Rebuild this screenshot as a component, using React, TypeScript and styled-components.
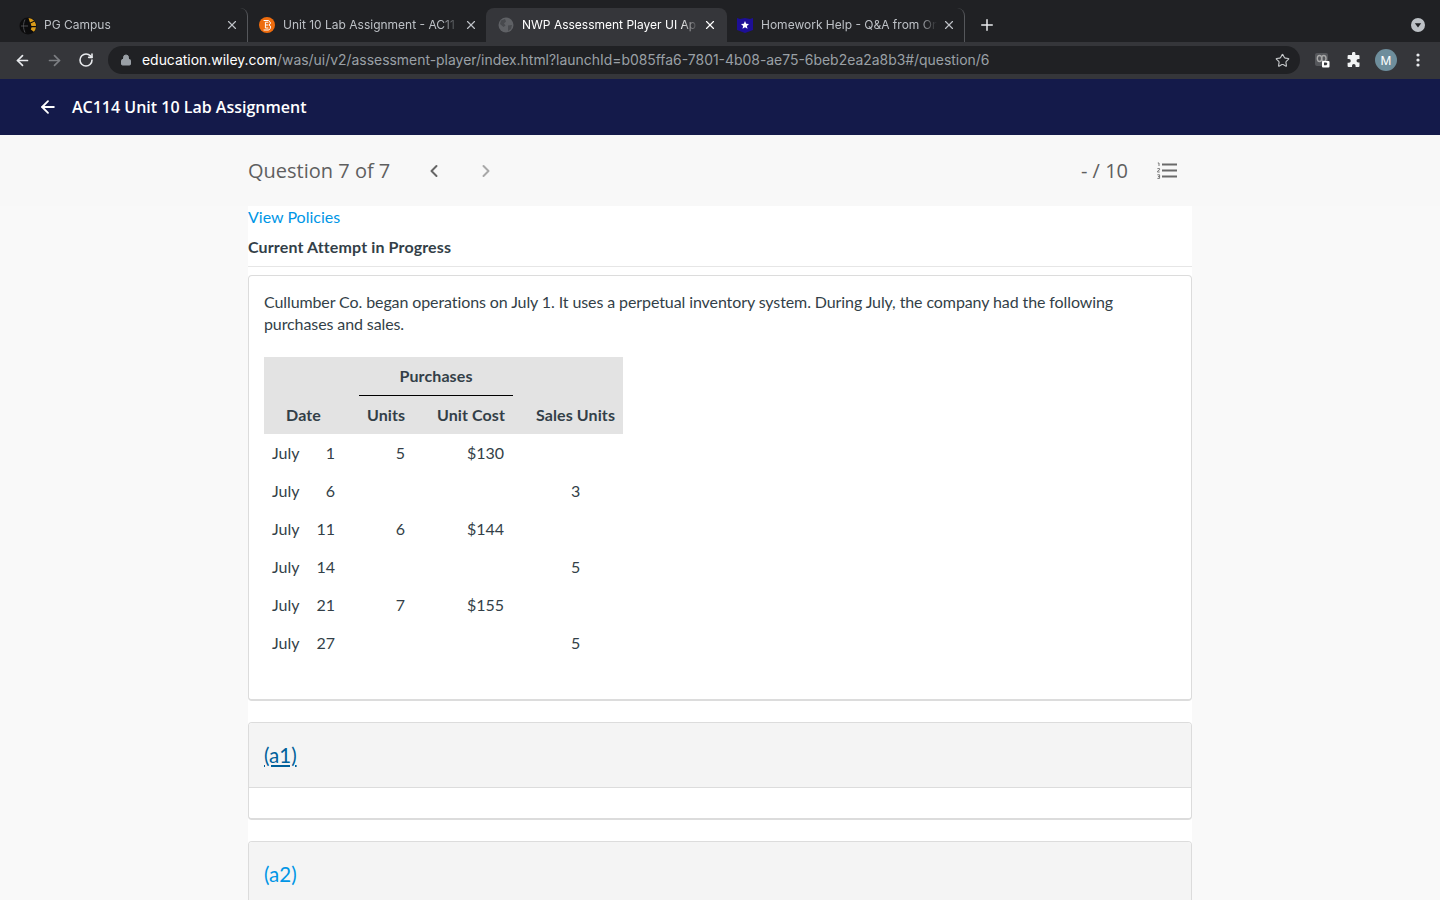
import React, { FC } from 'react'
import styled, { createGlobalStyle } from 'styled-components'
import { ArrowLeft, ArrowRight, RotateCw, Lock, Star, X, Plus, ChevronLeft, ChevronRight } from 'lucide-react'

const GlobalStyle = createGlobalStyle`
  html, body { margin: 0; padding: 0; height: 100%; overflow: hidden; background: #f9f9f9; }
  * { box-sizing: border-box; }
`

const Page = styled.div`
  width: 1440px;
  height: 900px;
  overflow: hidden;
  display: flex;
  flex-direction: column;
  font-family: Lato, "Liberation Sans", sans-serif;
  color: #333f48;
`

const TabStrip = styled.div`
  height: 42px;
  flex: none;
  background: #202124;
  display: flex;
  align-items: flex-end;
  padding-left: 8px;
  font-family: Inter, "Liberation Sans", sans-serif;
`

const Tab = styled.div<{ $active?: boolean; $divider?: boolean; $width: number; $left: number; $right: number }>`
  width: ${(p) => p.$width}px;
  height: 34px;
  display: flex;
  align-items: center;
  padding: 0 ${(p) => p.$right}px 0 ${(p) => p.$left}px;
  gap: 8px;
  background: ${(p) => (p.$active ? '#35363a' : 'transparent')};
  border-radius: 8px 8px 0 0;
  color: ${(p) => (p.$active ? '#fff' : '#bdc1c6')};
  font-size: 12px;
  border-right: ${(p) => (p.$divider ? '1px solid #55575b' : 'none')};
`

const TabTitle = styled.span`
  flex: 1;
  margin-right: -3px;
  padding-bottom: 2px;
  white-space: nowrap;
  overflow: hidden;
  -webkit-mask-image: linear-gradient(to right, #000 90%, transparent);
  mask-image: linear-gradient(to right, #000 90%, transparent);
`

const Favicon = styled.span`
  width: 16px;
  height: 16px;
  flex: none;
  display: flex;
  justify-content: center;
`

const NewTab = styled.div`
  margin-left: 13px;
  height: 34px;
  display: flex;
  align-items: center;
  color: #e8eaed;
`

const ProfileDrop = styled.div`
  margin-left: auto;
  margin-right: 14px;
  height: 34px;
  display: flex;
  align-items: center;
`

const Toolbar = styled.div`
  height: 37px;
  flex: none;
  background: #35363a;
  display: flex;
  align-items: center;
  padding: 0 0 1px 14px;
  font-family: Inter, "Liberation Sans", sans-serif;
`

const NavIcons = styled.div`
  display: flex;
  align-items: center;
  gap: 15px;
  width: 94px;
  color: #e8eaed;
`

const Omnibox = styled.div`
  width: 1192px;
  height: 28px;
  border-radius: 14px;
  background: #202124;
  display: flex;
  align-items: center;
  padding: 0 10px 0 12px;
  font-size: 13.93px;
`

const Host = styled.span`
  color: #fff;
  margin-left: 10px;
  padding-bottom: 1px;
`

const UrlPath = styled.span`
  color: #9aa0a6;
  flex: 1;
  padding-bottom: 1px;
`

const Extensions = styled.div`
  display: flex;
  align-items: center;
  margin-left: 14px;
  color: #e8eaed;
`

const PuzzleSlot = styled.span`
  display: flex;
  margin: 0 13px 0 16px;
`

const Avatar = styled.div`
  width: 22px;
  height: 22px;
  border-radius: 50%;
  background: #6e8e9c;
  color: #fff;
  font-size: 12px;
  display: flex;
  align-items: center;
  justify-content: center;
  margin-right: 19px;
`

const AppBar = styled.header`
  height: 56px;
  flex: none;
  background: #141a4a;
  color: #fff;
  display: flex;
  align-items: center;
  padding-left: 38px;
  gap: 14px;
  font-family: "Open Sans", sans-serif;
  font-size: 16px;
  font-weight: 600;
`

const AppTitle = styled.span`
  padding-bottom: 1px;
`

const QuestionBar = styled.div`
  height: 71px;
  flex: none;
  background: #f8f8f8;
  display: flex;
  justify-content: center;
`

const QuestionInner = styled.div`
  width: 944px;
  display: flex;
  align-items: center;
  font-family: "Open Sans", sans-serif;
  color: #5f5f5f;
  font-size: 20px;
  padding-right: 15px;
`

const Pager = styled.div`
  display: flex;
  gap: 32px;
  margin-left: 34px;
`

const PagerButton = styled.span<{ $dim?: boolean }>`
  display: flex;
  color: ${(p) => (p.$dim ? '#a8a8a8' : '#666')};
`

const Score = styled.div`
  margin-left: auto;
  margin-right: 29px;
`

const Column = styled.main`
  width: 944px;
  flex: 1;
  margin: 0 auto;
  background: #fff;
`

const PolicyLink = styled.a`
  display: block;
  color: #0096e6;
  font-size: 16px;
  line-height: 22px;
`

const AttemptTitle = styled.div`
  margin-top: 8px;
  height: 31px;
  line-height: 22px;
  font-size: 16px;
  font-weight: 700;
  letter-spacing: 0.13px;
  border-bottom: 1px solid #e6e6e6;
`

const Card = styled.section`
  margin-top: 8px;
  height: 426px;
  border: 1px solid #dcdcdc;
  border-bottom-width: 2px;
  border-radius: 4px;
  padding: 15px;
`

const Prompt = styled.p`
  margin: 0 0 22px;
  font-size: 16px;
  line-height: 22px;
  letter-spacing: -0.1px;
  color: #333f48;
`

const Table = styled.table`
  border-collapse: collapse;
  table-layout: fixed;
  width: 359px;
  font-size: 16px;
  color: #333f48;

  thead tr:last-child th {
    height: 39px;
    padding-bottom: 1px;
  }
`

const HeadCell = styled.th<{ $align?: string; $rule?: boolean }>`
  background: #e3e3e3;
  padding: 0 ${(p) => (p.$align === 'right' ? 9 : 8)}px ${(p) => (p.$rule ? 1 : 0)}px 8px;
  height: 38px;
  font-weight: 700;
  letter-spacing: 0.1px;
  white-space: nowrap;
  text-align: ${(p) => p.$align || 'center'};
  border-bottom: ${(p) => (p.$rule ? '1px solid #000' : 'none')};
`

const Cell = styled.td<{ $align?: string }>`
  padding: 0 ${(p) => (p.$align === 'right' ? 9 : 8)}px 2px 8px;
  height: 38px;
  text-align: ${(p) => p.$align || 'left'};
`

const DatePair = styled.div`
  display: flex;
  justify-content: space-between;
`

const Part = styled.section`
  margin-top: 21px;
  border: 1px solid #dcdcdc;
  border-bottom-width: 2px;
  border-radius: 4px;
  overflow: hidden;
`

const PartHeader = styled.div<{ $focused?: boolean }>`
  height: 64px;
  background: #f4f4f4;
  display: flex;
  align-items: center;
  padding-left: 15px;
  font-size: 20.5px;
  color: ${(p) => (p.$focused ? '#00609a' : '#0096e6')};
  text-decoration: ${(p) => (p.$focused ? 'underline' : 'none')};
`

const PartBody = styled.div`
  height: 31px;
  border-top: 1px solid #dcdcdc;
`

const rows = [
  { day: 1, units: 5, cost: '$130' },
  { day: 6, sales: 3 },
  { day: 11, units: 6, cost: '$144' },
  { day: 14, sales: 5 },
  { day: 21, units: 7, cost: '$155' },
  { day: 27, sales: 5 },
]

const CloseIcon = styled(X)`
  flex: none;
`

const Close: FC<{ color?: string }> = ({ color = '#bdc1c6' }) => <CloseIcon size={14} strokeWidth={2} color={color} />

const GlobeDark = () => (
  <svg width="16" height="16" viewBox="0 0 16 16">
    <circle cx="8" cy="8" r="7.5" fill="#5f6165" />
    <path d="M3 3.5l4-1.5 1 2.5-2 2 1.5 2-2 1.5-3.5-3zM10 8.5l4-.5-1 4-3 2z" fill="#484a4e" />
  </svg>
)

const PgSvg = styled.svg`
  flex: none;
`

const PgLogo = () => (
  <PgSvg width="18" height="18" viewBox="0 0 18 18">
    <circle cx="9" cy="9" r="8.5" fill="#0c0c0d" />
    <path d="M9.5 1a8 8 0 0 1 5.6 2.8L11 5.5zM11.6 6.5l4-2a8 8 0 0 1 1.4 4.5h-4.6zM12.6 10.2H17a8 8 0 0 1-2.2 4.6l-3-2.2z" fill="#d99b1a" />
    <path d="M2 9h7M6 2.5c-2 4-2 9 0 13" stroke="#4a4b4e" strokeWidth="1" fill="none" />
  </PgSvg>
)

const D2lLogo = () => (
  <svg width="16" height="16" viewBox="0 0 16 16">
    <circle cx="8" cy="8" r="8" fill="#ee6c0e" />
    <path d="M4.6 3.5h5l1.6 1.5v2L10 8l1.4 1v2.3L9.8 13H4.6M6.4 5.2h3M6.4 8h3M6.4 11h3M6.4 5.2V11" stroke="#fff" strokeWidth="1" fill="none" />
  </svg>
)

const ShieldStar = () => (
  <svg width="16" height="16" viewBox="0 0 16 16">
    <path d="M0 1l3 1 5-1 5 1 3-1v12l-8 3-8-3z" fill="#1d0f96" />
    <path d="M8 4l1.2 2.7 2.8.3-2.1 1.9.6 2.9L8 10.3l-2.5 1.5.6-2.9L4 7l2.8-.3z" fill="#fff" />
  </svg>
)

const ChromeMenu = () => (
  <svg width="16" height="16" viewBox="0 0 16 16">
    <circle cx="8" cy="8" r="7" fill="#bdc1c6" />
    <path d="M4.8 6.2h6.4L8 10.6z" fill="#202124" />
  </svg>
)

const ExtensionBadge = () => (
  <svg width="16" height="16" viewBox="0 0 16 16">
    <rect x="1" y="1" width="13" height="13" rx="2" fill="#55575b" />
    <ellipse cx="5.5" cy="6.5" rx="2.2" ry="3" fill="none" stroke="#a8a8a8" strokeWidth="1.4" />
    <ellipse cx="9.8" cy="6.5" rx="2.2" ry="3" fill="none" stroke="#a8a8a8" strokeWidth="1.4" />
    <rect x="8" y="9" width="7.5" height="6.5" rx="1" fill="#fff" />
    <path d="M10 10.5h2.4l1 1.3-1 1.4H10z" fill="#35363a" />
  </svg>
)

const PuzzlePiece = () => (
  <svg width="16" height="16" viewBox="0 0 16 16">
    <path
      d="M6 1.6a1.7 1.7 0 0 1 3.4 0V3h3.1a1 1 0 0 1 1 1v3h-1.2a1.8 1.8 0 0 0 0 3.6h1.2V14a1 1 0 0 1-1 1H9.6v-1.2a1.8 1.8 0 0 0-3.6 0V15H2.6a1 1 0 0 1-1-1v-3.3H3a1.8 1.8 0 0 0 0-3.6H1.6V4a1 1 0 0 1 1-1H6z"
      fill="#f1f3f4"
    />
  </svg>
)

const Kebab = () => (
  <svg width="4" height="14" viewBox="0 0 4 14">
    <circle cx="2" cy="2" r="1.6" fill="#e8eaed" />
    <circle cx="2" cy="7" r="1.6" fill="#e8eaed" />
    <circle cx="2" cy="12" r="1.6" fill="#e8eaed" />
  </svg>
)

const NumberedList = () => (
  <svg width="20" height="17" viewBox="0 0 20 17">
    <path d="M5 2.5h15M5 8.5h15M5 14.5h15" stroke="#6a6a6a" strokeWidth="1.8" />
    <path d="M0.8 1h1.2v3M0.4 6.6h2.2v1.2L0.4 9.4v.6h2.3M0.4 12.8h2.2v3.6H0.4M1 14.6h1.6" stroke="#6a6a6a" strokeWidth="0.9" fill="none" />
  </svg>
)

const App: FC = () => (
  <Page>
    <GlobalStyle />
    <TabStrip>
      <Tab $divider $width={240} $left={12} $right={8}>
        <Favicon><PgLogo /></Favicon>
        <TabTitle>PG Campus</TabTitle>
        <Close />
      </Tab>
      <Tab $width={238} $left={11} $right={8}>
        <Favicon><D2lLogo /></Favicon>
        <TabTitle>Unit 10 Lab Assignment - AC11</TabTitle>
        <Close />
      </Tab>
      <Tab $active $width={241} $left={12} $right={10}>
        <Favicon><GlobeDark /></Favicon>
        <TabTitle>NWP Assessment Player UI Ap</TabTitle>
        <Close color="#fff" />
      </Tab>
      <Tab $divider $width={238} $left={10} $right={8}>
        <Favicon><ShieldStar /></Favicon>
        <TabTitle>Homework Help - Q&amp;A from On</TabTitle>
        <Close />
      </Tab>
      <NewTab><Plus size={18} strokeWidth={2} /></NewTab>
      <ProfileDrop><ChromeMenu /></ProfileDrop>
    </TabStrip>
    <Toolbar>
      <NavIcons>
        <ArrowLeft size={17} strokeWidth={2.4} />
        <ArrowRight size={17} strokeWidth={2.4} color="#7d7f83" />
        <RotateCw size={16} strokeWidth={2.4} />
      </NavIcons>
      <Omnibox>
        <Lock size={12} fill="#9aa0a6" color="#9aa0a6" />
        <Host>education.wiley.com</Host>
        <UrlPath>/was/ui/v2/assessment-player/index.html?launchId=b085ffa6-7801-4b08-ae75-6beb2ea2a8b3#/question/6</UrlPath>
        <Star size={15} color="#c4c7c9" strokeWidth={1.8} />
      </Omnibox>
      <Extensions>
        <ExtensionBadge />
        <PuzzleSlot><PuzzlePiece /></PuzzleSlot>
        <Avatar>M</Avatar>
        <Kebab />
      </Extensions>
    </Toolbar>
    <AppBar>
      <ArrowLeft size={20} strokeWidth={2.2} />
      <AppTitle>AC114 Unit 10 Lab Assignment</AppTitle>
    </AppBar>
    <QuestionBar>
      <QuestionInner>
        <span>Question 7 of 7</span>
        <Pager>
          <PagerButton><ChevronLeft size={20} strokeWidth={2.4} /></PagerButton>
          <PagerButton $dim><ChevronRight size={20} strokeWidth={2.4} /></PagerButton>
        </Pager>
        <Score>- / 10</Score>
        <NumberedList />
      </QuestionInner>
    </QuestionBar>
    <Column>
      <PolicyLink>View Policies</PolicyLink>
      <AttemptTitle>Current Attempt in Progress</AttemptTitle>
      <Card>
        <Prompt>
          Cullumber Co. began operations on July 1. It uses a perpetual inventory system. During July, the company had the following purchases and sales.
        </Prompt>
        <Table>
          <colgroup>
            <col width="79" />
            <col width="16" />
            <col width="55" />
            <col width="15" />
            <col width="84" />
            <col width="15" />
            <col width="95" />
          </colgroup>
          <thead>
            <tr>
              <HeadCell />
              <HeadCell />
              <HeadCell colSpan={3} $rule>Purchases</HeadCell>
              <HeadCell />
              <HeadCell />
            </tr>
            <tr>
              <HeadCell>Date</HeadCell>
              <HeadCell />
              <HeadCell $align="right">Units</HeadCell>
              <HeadCell />
              <HeadCell $align="right">Unit Cost</HeadCell>
              <HeadCell />
              <HeadCell>Sales Units</HeadCell>
            </tr>
          </thead>
          <tbody>
            {rows.map((r) => (
              <tr key={r.day}>
                <Cell><DatePair><span>July</span><span>{r.day}</span></DatePair></Cell>
                <Cell />
                <Cell $align="right">{r.units}</Cell>
                <Cell />
                <Cell $align="right">{r.cost}</Cell>
                <Cell />
                <Cell $align="center">{r.sales}</Cell>
              </tr>
            ))}
          </tbody>
        </Table>
      </Card>
      <Part>
        <PartHeader $focused>(a1)</PartHeader>
        <PartBody />
      </Part>
      <Part>
        <PartHeader>(a2)</PartHeader>
        <PartBody />
      </Part>
    </Column>
  </Page>
)

export default App
